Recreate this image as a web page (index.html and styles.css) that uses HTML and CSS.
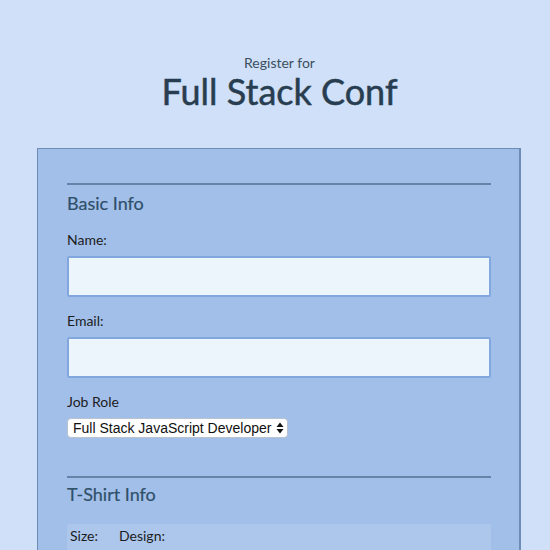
FILE: index.html
```html
<!DOCTYPE html>
<html lang="en">
<head>
<meta charset="utf-8">
<title>Full Stack Conf</title>
<link rel="stylesheet" href="styles.css">
</head>
<body>
<header class="header">
  <span class="subtitle">Register for</span>
  <h1 class="title">Full Stack Conf</h1>
</header>
<form class="card">
  <section class="section">
    <hr class="rule">
    <h2 class="legend">Basic Info</h2>
    <label class="label" for="name">Name:</label>
    <input class="field" id="name" type="text">
    <label class="label" for="mail">Email:</label>
    <input class="field" id="mail" type="email">
    <label class="label" for="title">Job Role</label>
    <span class="select-wrap">
      <select class="select" id="title">
        <option>Full Stack JavaScript Developer</option>
      </select>
      <svg class="select-arrows" width="8" height="12" viewBox="0 0 8 12"><path d="M4 0.5 L7.5 5 L0.5 5 Z M4 11.5 L7.5 7 L0.5 7 Z" fill="#111"/></svg>
    </span>
  </section>
  <section class="section shirt">
    <hr class="rule">
    <h2 class="legend">T-Shirt Info</h2>
    <div class="shirt-box">
      <span class="shirt-label">Size:</span>
      <span class="shirt-label">Design:</span>
    </div>
  </section>
</form>
</body>
</html>
```

FILE: styles.css
```css
html, body {
  margin: 0;
  padding: 0;
}
body {
  background: #cfe0f8;
  font-family: "Lato", "Noto Sans", sans-serif;
  color: #1c1c1c;
  height: 550px;
  overflow: hidden;
}
.header {
  display: flex;
  flex-direction: column;
  align-items: center;
  padding-top: 54px;
  padding-left: 9px;
}
.subtitle {
  font-size: 14px;
  line-height: 17px;
  color: #3b4f60;
}
.title {
  margin: 1px 0 0;
  font-size: 36px;
  line-height: 38px;
  font-weight: 400;
  color: #283e50;
  -webkit-text-stroke: 0.5px #283e50;
}
.card {
  margin: 38px 0 0 37px;
  width: 424px;
  padding: 0 28px 40px 29px;
  background: #a2bfe9;
  border: 1px solid #6d8db7;
  box-shadow: 1px 0 0 #6d8db7;
}
.section {
  display: flex;
  flex-direction: column;
  align-items: flex-start;
}
.rule {
  align-self: stretch;
  margin: 34px 0 0;
  border: 0;
  height: 2px;
  background: #6585a8;
}
.shirt .rule {
  margin-top: 38px;
}
.legend {
  margin: 6px 0 0;
  font-size: 18px;
  line-height: 24px;
  font-weight: 400;
  color: #2f5069;
  -webkit-text-stroke: 0.2px #2f5069;
}
.shirt .legend {
  margin-top: 4px;
}
.label {
  margin-top: 16px;
  font-size: 14px;
  line-height: 18px;
}
.label + .field {
  margin-top: 7px;
}
.field + .label {
  margin-top: 15px;
}
.field {
  box-sizing: border-box;
  align-self: stretch;
  height: 41px;
  margin: 0;
  background: #edf5fc;
  border: 2px solid #82a7df;
  border-radius: 2px;
  outline: none;
}
.select-wrap {
  position: relative;
  margin-top: 7px;
  display: inline-flex;
}
.select {
  appearance: none;
  -webkit-appearance: none;
  box-sizing: border-box;
  height: 20px;
  margin: 0;
  padding: 0 15px 0 5px;
  font-family: "Liberation Sans", Arial, sans-serif;
  font-size: 14px;
  color: #111;
  background: #fff;
  border: 1px solid #b9c3cf;
  border-radius: 4px;
}
.select-arrows {
  position: absolute;
  right: 4px;
  top: 4px;
}
.shirt-box {
  align-self: stretch;
  margin-top: 18px;
  padding: 3px 3px;
  display: flex;
  gap: 21px;
  background: #adc6ec;
  border-radius: 2px;
  height: 60px;
}
.shirt-label {
  font-size: 14px;
  line-height: 18px;
}
```
